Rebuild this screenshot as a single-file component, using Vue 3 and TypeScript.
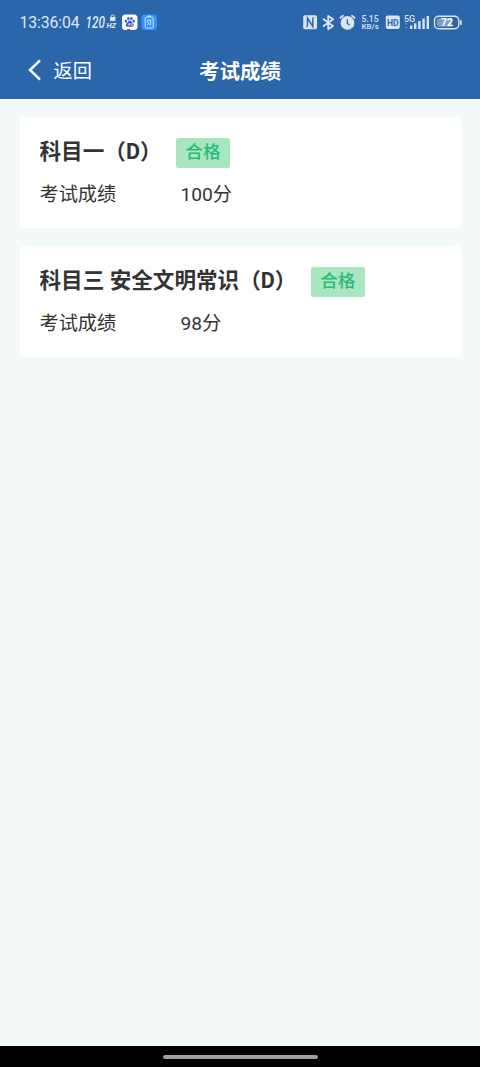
<script setup lang="ts">
interface ExamResult {
  subject: string
  status: string
  score: number
}

const results: ExamResult[] = [
  { subject: '科目一（D）', status: '合格', score: 100 },
  { subject: '科目三 安全文明常识（D）', status: '合格', score: 98 },
]
</script>

<template>
  <div class="screen">
    <header class="top">
      <div class="status">
        <span class="time">13:36:04</span>
        <svg class="left-icons" width="76" height="20" viewBox="0 0 76 20">
          <text class="rate" x="1.5" y="16" textLength="19.5" lengthAdjust="spacingAndGlyphs">120</text>
          <text class="hz" x="22.4" y="16" textLength="9.6" lengthAdjust="spacingAndGlyphs">HZ</text>
          <path d="M27.2 6V4.4a1.5 1.5 0 0 1 3 0V6" fill="none" stroke="#dfe8f3" stroke-width="1" />
          <rect x="26" y="5" width="5.4" height="4" rx=".6" fill="#dfe8f3" />
          <rect x="38" y="2.5" width="15.5" height="15.5" rx="3.5" fill="#fff" />
          <g fill="#3458d8">
            <ellipse cx="41.9" cy="9" rx="1.2" ry="1.5" />
            <ellipse cx="44.3" cy="6.5" rx="1.2" ry="1.5" />
            <ellipse cx="47.4" cy="6.5" rx="1.2" ry="1.5" />
            <ellipse cx="49.7" cy="9" rx="1.2" ry="1.5" />
            <path d="M45.8 8.6c1.5 0 2 1.6 3 2.5 1.8 1.6.8 4-1.2 3.7-1.2-.2-2.4-.2-3.6 0-2 .3-3-2.1-1.2-3.7 1-.9 1.5-2.5 3-2.5z" />
          </g>
          <path d="M44.3 11.2v2h1.2v-2M47 11v2.3h1.4V11" fill="none" stroke="#fff" stroke-width=".6" />
          <path d="M43 17h3.5v1H43z" fill="#e83c4a" />
          <rect x="57.5" y="2.5" width="15.5" height="15.5" rx="3.5" fill="#2f93fa" />
          <rect x="61.2" y="5" width="8" height="11" rx="1.4" fill="none" stroke="#d9ecff" stroke-width="1" />
          <path d="M63.5 4.2h3.5" stroke="#d9ecff" stroke-width="1.2" />
          <path d="M63.2 8.2h4M63.6 8.4l.6 2.6 1.5 1.7 1.4-1.7-.9-1.1 1-1.5M63.2 13.2l1.2-1M67.4 13.2l-1-1" fill="none" stroke="#d9ecff" stroke-width=".9" />
        </svg>
        <svg class="right-icons" width="162" height="22" viewBox="301 12 162 22">
          <rect x="303.2" y="15.2" width="13.8" height="14" rx="1.8" fill="#dbe5f2" />
          <path d="M307.5 26v-8l5.3 8.4v-8.2" fill="none" stroke="#2c66aa" stroke-width="1.5" />
          <path d="M306 26.6h1.8M312.5 17.7h1.8" stroke="#2c66aa" stroke-width=".9" />
          <path d="M322.9 18.7l10.2 7.2-4.9 3.3V16l4.9 3.3-10.2 7.1" fill="none" stroke="#dbe5f2" stroke-width="1.8" stroke-linejoin="round" />
          <circle cx="347.5" cy="22.9" r="6.9" fill="#dbe5f2" />
          <path d="M340.4 17.9l2.5-2.2M354.6 17.9l-2.5-2.2" stroke="#dbe5f2" stroke-width="1.8" stroke-linecap="round" />
          <path d="M347.3 19.3v4.1l2.4 1.6" fill="none" stroke="#2c66aa" stroke-width="1.3" />
          <text class="speed" x="361.6" y="21.8" textLength="17" lengthAdjust="spacingAndGlyphs">5.15</text>
          <text class="unit" x="361.4" y="29.4" textLength="17.4" lengthAdjust="spacingAndGlyphs">KB/s</text>
          <rect x="385.8" y="15.5" width="14" height="13.4" rx="1.8" fill="#dbe5f2" />
          <text class="hd" x="387" y="25.5" textLength="11.7" lengthAdjust="spacingAndGlyphs">HD</text>
          <text class="net" x="404" y="21.5" textLength="11.2" lengthAdjust="spacingAndGlyphs">5G</text>
          <path d="M405.5 23.8h1.6M405.5 27.4h1.6" stroke="#7fa2cd" stroke-width="1.2" />
          <path d="M411.2 25.6V29M415.2 23.2V29M419.4 21V29M423.6 18.5V29M427.8 16V29" stroke="#dbe5f2" stroke-width="2.4" />
          <rect x="434.5" y="16.3" width="24.3" height="12.4" rx="4" fill="none" stroke="#dbe5f2" stroke-width="1.4" />
          <path d="M439 18.2h13v8.6h-13a2.3 2.3 0 0 1-2.3-2.3v-4a2.3 2.3 0 0 1 2.3-2.3z" fill="#7b9dca" />
          <path d="M460.9 20.3v4.4" stroke="#dbe5f2" stroke-width="1.7" />
          <text class="charge" x="441" y="26.4" textLength="12" lengthAdjust="spacingAndGlyphs">72</text>
        </svg>
      </div>
      <nav class="nav">
        <div class="back">
          <svg width="14" height="22" viewBox="0 0 14 22">
            <path d="M12 1.4L2 11l10 9.6" fill="none" stroke="#fff" stroke-width="2.5" />
          </svg>
          <span>返回</span>
        </div>
        <h1>考试成绩</h1>
      </nav>
    </header>
    <main class="list">
      <section v-for="item in results" :key="item.subject" class="card">
        <div class="heading">
          <h2>{{ item.subject }}</h2>
          <span class="badge">{{ item.status }}</span>
        </div>
        <div class="row">
          <span class="label">考试成绩</span>
          <span>{{ item.score }}分</span>
        </div>
      </section>
    </main>
    <footer class="home"><div class="handle"></div></footer>
  </div>
</template>

<style>
body {
  margin: 0;
  background: #f4f9fa;
}
</style>

<style scoped>
.screen {
  display: flex;
  flex-direction: column;
  width: 480px;
  height: 1067px;
  overflow: hidden;
  background: #f4f9fa;
  color: #333;
  font-family: Roboto, "Noto Sans CJK SC", sans-serif;
}
.top {
  height: 99px;
  flex: none;
  background: #2c66aa;
  color: #fff;
}
.status {
  display: flex;
  height: 44px;
  box-sizing: border-box;
  padding: 12px 17px 0 19.5px;
}
.time {
  width: 64.5px;
  font-size: 15.8px;
  line-height: 21px;
  letter-spacing: -0.1px;
  color: #dfe8f3;
}
.left-icons {
  flex: none;
}
.right-icons {
  flex: none;
  margin-left: auto;
}
.rate {
  font: italic 500 16px Roboto, sans-serif;
  fill: #dfe8f3;
}
.hz {
  font: italic 700 8px Roboto, sans-serif;
  fill: #dfe8f3;
}
.speed {
  font: 500 8.6px Roboto, sans-serif;
  fill: #dbe5f2;
}
.unit {
  font: 500 7.4px Roboto, sans-serif;
  fill: #dbe5f2;
}
.hd {
  font: 700 9px Roboto, sans-serif;
  fill: #2c66aa;
}
.net {
  font: 500 9px Roboto, sans-serif;
  fill: #dbe5f2;
}
.charge {
  font: 700 11px Roboto, sans-serif;
  fill: #fff;
}
.nav {
  display: grid;
  grid-template-columns: 1fr auto 1fr;
  align-items: center;
  height: 52px;
}
.back {
  display: flex;
  align-items: center;
  gap: 11.5px;
  padding-left: 28px;
  font-size: 19.2px;
}
h1 {
  margin: 0 0 1px;
  font-size: 20.5px;
  font-weight: 600;
}
.list {
  display: flex;
  flex: 1;
  flex-direction: column;
  gap: 18px;
  padding: 18px 19.5px 0;
}
.card {
  height: 111px;
  box-sizing: border-box;
  padding: 20.5px 20px 0;
  border-radius: 4px;
  background: #fff;
}
.heading {
  display: flex;
  gap: 14.4px;
  height: 30px;
}
h2 {
  margin: 0;
  font-size: 21.6px;
  font-weight: 700;
  line-height: 27px;
}
.badge {
  width: 54px;
  height: 30px;
  border-radius: 2.5px;
  background: #a9e6c0;
  color: #2aba7a;
  font-size: 17.6px;
  font-weight: 500;
  line-height: 28px;
  text-align: center;
}
.row {
  display: flex;
  margin-top: 13px;
  font-size: 19.2px;
  line-height: 28px;
}
.label {
  width: 141px;
}
.home {
  display: flex;
  justify-content: center;
  height: 21px;
  flex: none;
  box-sizing: border-box;
  padding-top: 8.5px;
  background: #000;
}
.handle {
  width: 155px;
  height: 4.5px;
  border-radius: 3px;
  background: #a0a0a0;
}
</style>
